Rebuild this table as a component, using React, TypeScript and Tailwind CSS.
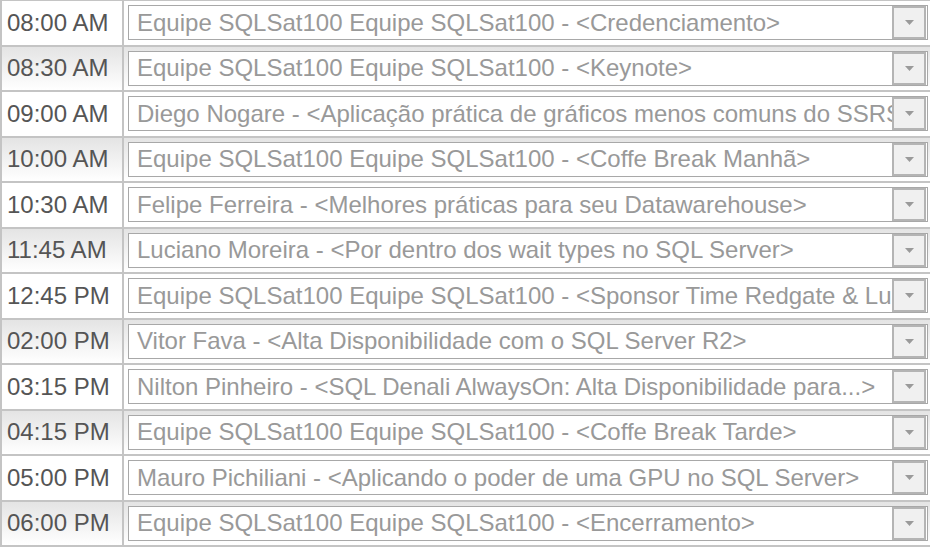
import React from "react";

const rows: [string, string][] = [
  ["08:00 AM", "Equipe SQLSat100 Equipe SQLSat100 - <Credenciamento>"],
  ["08:30 AM", "Equipe SQLSat100 Equipe SQLSat100 - <Keynote>"],
  ["09:00 AM", "Diego Nogare - <Aplicação prática de gráficos menos comuns do SSRS>"],
  ["10:00 AM", "Equipe SQLSat100 Equipe SQLSat100 - <Coffe Break Manhã>"],
  ["10:30 AM", "Felipe Ferreira - <Melhores práticas para seu Datawarehouse>"],
  ["11:45 AM", "Luciano Moreira - <Por dentro dos wait types no SQL Server>"],
  ["12:45 PM", "Equipe SQLSat100 Equipe SQLSat100 - <Sponsor Time Redgate & Lumigent>"],
  ["02:00 PM", "Vitor Fava - <Alta Disponibilidade com o SQL Server R2>"],
  ["03:15 PM", "Nilton Pinheiro - <SQL Denali AlwaysOn: Alta Disponibilidade para...>"],
  ["04:15 PM", "Equipe SQLSat100 Equipe SQLSat100 - <Coffe Break Tarde>"],
  ["05:00 PM", "Mauro Pichiliani - <Aplicando o poder de uma GPU no SQL Server>"],
  ["06:00 PM", "Equipe SQLSat100 Equipe SQLSat100 - <Encerramento>"],
];

function Arrow() {
  return (
    <svg width="9" height="5" viewBox="0 0 9 5">
      <polygon points="0,0 9,0 4.5,5" fill="#9a9a9a" />
    </svg>
  );
}

export default function App() {
  return (
    <div
      className="w-[930px] h-[549px] bg-white overflow-hidden"
      style={{ fontFamily: '"Liberation Sans", Arial, sans-serif' }}
    >
      <div className="h-[547px] flex flex-col border-t border-l-2 border-[#c4c4c4]">
        {rows.map(([time, label], i) => (
          <div
            key={time}
            className={
              i % 2 === 1
                ? "flex-1 flex border-b-2 border-[#c4c4c4] bg-gradient-to-b from-[#e4e4e4] to-white"
                : "flex-1 flex border-b-2 border-[#c4c4c4] bg-white"
            }
          >
            <div className="w-[122px] shrink-0 border-r-2 border-[#c4c4c4] flex items-center pl-[5px] text-[24px] text-[#555555]">
              {time}
            </div>
            <div className="flex-1 min-w-0 flex items-center pl-[4px] pr-[2px]">
              <div className="w-full h-[35px] flex items-center border border-[#a8a8a8] bg-white">
                <div className="flex-1 min-w-0 overflow-hidden whitespace-nowrap pl-[8px] text-[24px] text-[#999999]">
                  {label}
                </div>
                <div className="w-[34px] h-[33px] mr-px shrink-0 border-2 border-[#b4b4b4] bg-[#f0f0f0] flex items-center justify-center">
                  <Arrow />
                </div>
              </div>
            </div>
          </div>
        ))}
      </div>
    </div>
  );
}
